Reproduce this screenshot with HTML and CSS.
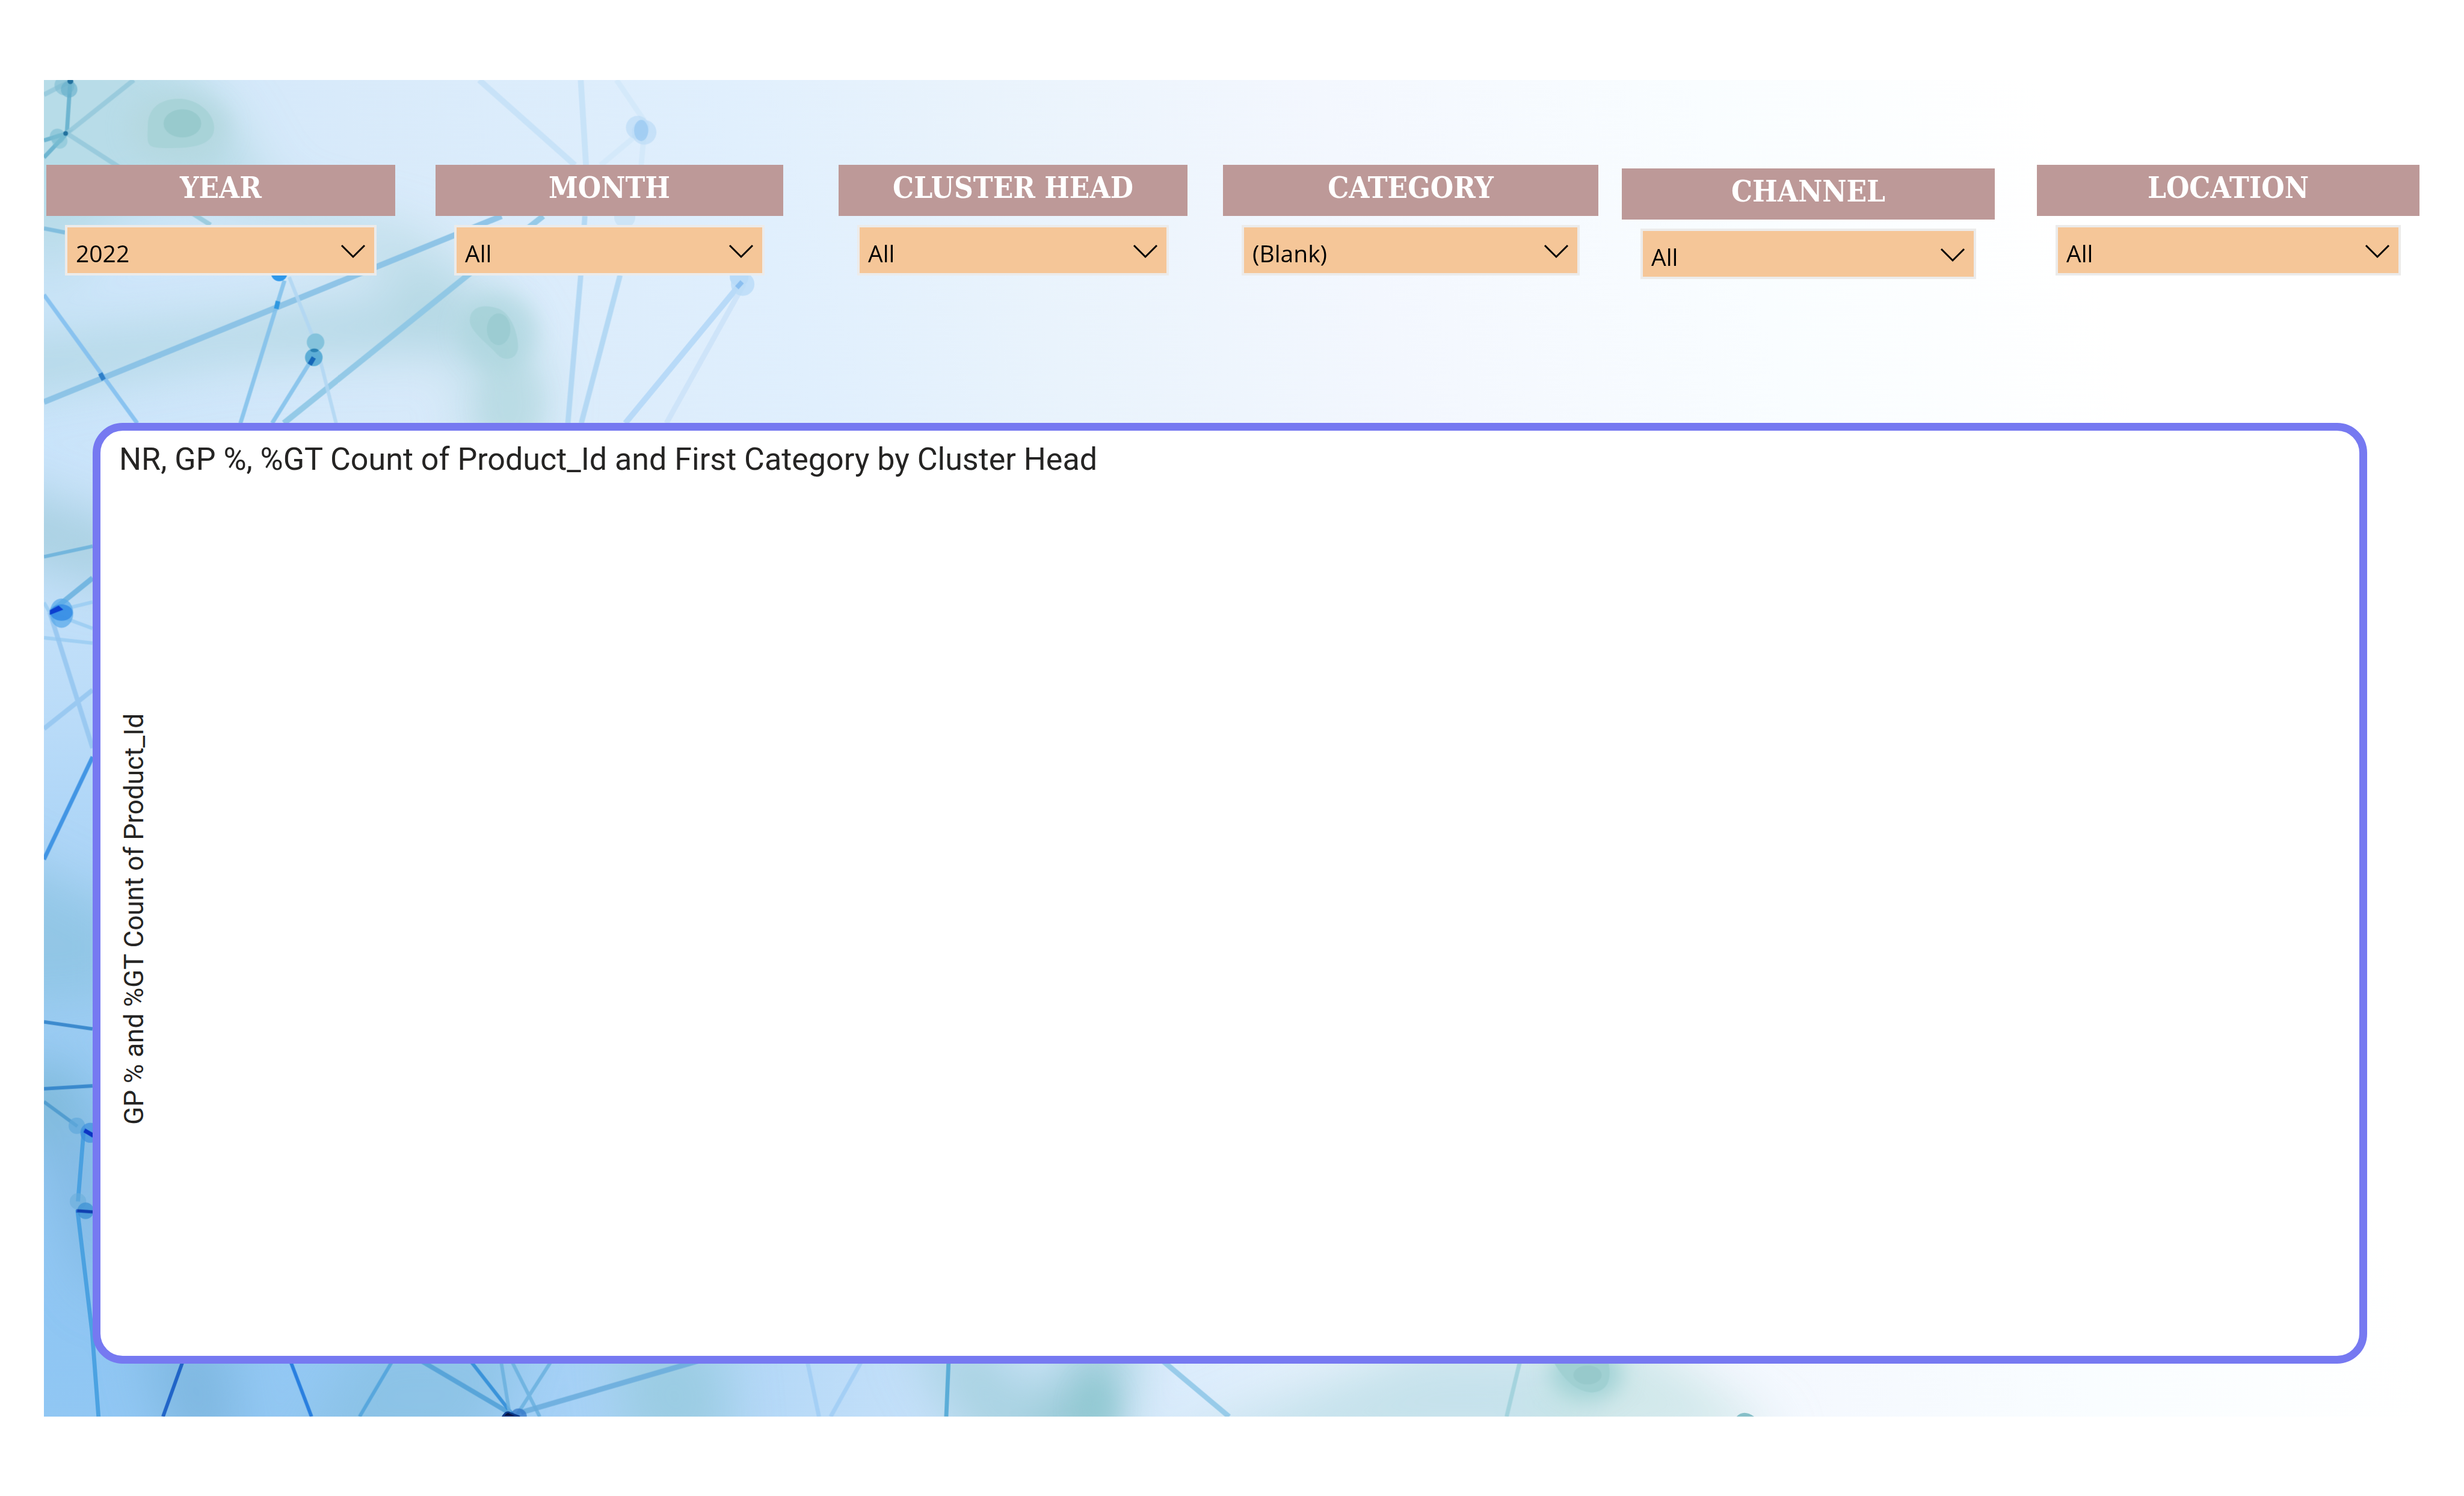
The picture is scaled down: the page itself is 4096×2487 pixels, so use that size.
FILE: index.html
```html
<!DOCTYPE html>
<html lang="en">
<head>
<meta charset="utf-8">
<title>Cluster Head Report</title>
<link rel="stylesheet" href="styles.css">
</head>
<body>
<main class="report">
  <svg class="backdrop" viewBox="75 136 4050 2279" preserveAspectRatio="none" aria-hidden="true">
    <defs>
      <linearGradient id="base" gradientUnits="userSpaceOnUse" x1="75" y1="900" x2="3400" y2="-100">
        <stop offset="0" stop-color="#c9e4fa"/>
        <stop offset=".2" stop-color="#d8eafa"/>
        <stop offset=".38" stop-color="#e0effd"/>
        <stop offset=".5" stop-color="#e9f3fc"/>
        <stop offset=".66" stop-color="#f3f7fe"/>
        <stop offset=".84" stop-color="#f9fdff"/>
        <stop offset="1" stop-color="#ffffff"/>
      </linearGradient>
      <radialGradient id="deep" gradientUnits="userSpaceOnUse" cx="0" cy="0" r="1" gradientTransform="translate(75 2300) scale(2300 1700)">
        <stop offset="0" stop-color="#8fc6f3"/>
        <stop offset=".25" stop-color="#8fc6f3" stop-opacity=".9"/>
        <stop offset=".55" stop-color="#a4d0f6" stop-opacity=".65"/>
        <stop offset="1" stop-color="#cfe4fa" stop-opacity="0"/>
      </radialGradient>
      <filter id="soft" x="-100%" y="-100%" width="300%" height="300%"><feGaussianBlur stdDeviation="18"/></filter>
      <filter id="wide" filterUnits="userSpaceOnUse" x="-200" y="-100" width="4500" height="2800"><feGaussianBlur stdDeviation="42"/></filter>
    </defs>
    <rect x="75" y="136" width="4050" height="2279" fill="url(#base)"/>
    <rect x="75" y="136" width="4050" height="2279" fill="url(#deep)"/>
    <g filter="url(#wide)">
      <path d="M-100 0H160L340 130L420 250L330 330L120 380L-100 420Z" fill="#a8d5dc" opacity=".6"/>
      <path d="M360 180L480 340L720 400L860 520L930 640L920 780H800L790 600L620 440L330 330Z" fill="#add6dd" opacity=".6"/>
      <path d="M-100 600L400 540L760 490L800 600L400 610L-100 690Z" fill="#a9d2dd" opacity=".75"/>
      <path d="M40 370H200L110 480H40Z" fill="#add6dd" opacity=".5"/>
      <path d="M-60 800L220 900V1010L-60 930Z" fill="#a3cddd" opacity=".85"/>
      <path d="M-60 1420L220 1560V1700L-60 1720Z" fill="#85bfdc" opacity=".6"/>
      <ellipse cx="75" cy="1880" rx="70" ry="70" fill="#6fafc8" opacity=".6"/>
      <path d="M60 1960L200 1900V2230L140 2180Z" fill="#79b3da" opacity=".6"/>
      <path d="M240 2280H390L410 2480H300Z" fill="#7bb4dc" opacity=".8"/>
      <path d="M620 2280H900L820 2480H500Z" fill="#86bedd" opacity=".6"/>
      <path d="M1050 2280H1230L1250 2480H1070Z" fill="#94c9dc" opacity=".75"/>
      <path d="M1550 2280H1680L1880 2480H1660Z" fill="#9fcddb" opacity=".75"/>
      <path d="M1840 2280H1930L1900 2480H1740Z" fill="#88c2cc" opacity=".8"/>
      <path d="M1960 2480L2420 2290H2600L2740 2480Z" fill="#b9dce6" opacity=".75"/>
      <path d="M2620 2240H2740L3040 2450L2640 2480Z" fill="#bfe0e1" opacity=".65"/>
    </g>
    <g filter="url(#soft)">
      <ellipse cx="304" cy="218" rx="84" ry="58" fill="#b5d8e0"/>
      <ellipse cx="850" cy="566" rx="66" ry="66" fill="#a9d4db" opacity=".6"/>
      <ellipse cx="870" cy="690" rx="54" ry="80" fill="#b0d8dd" opacity=".4"/>
      <ellipse cx="2704" cy="2342" rx="62" ry="46" fill="#a3d3d6"/>
      <ellipse cx="1870" cy="2400" rx="36" ry="50" fill="#8ac6cd" opacity=".5"/>
    </g>
    <path d="M252 215C252 180 278 168 306 168S364 190 365 216S340 252 294 252S251 250 252 215Z" fill="#a8d3d8"/>
    <ellipse cx="311" cy="210" rx="32" ry="24" fill="#98cacd"/>
    <path d="M801 548C800 520 828 518 850 526S884 572 883 592S860 618 846 602S803 566 801 548Z" fill="#a3d0d6" opacity=".7"/>
    <ellipse cx="850" cy="561" rx="20" ry="27" fill="#98cacf" opacity=".8"/>
    <path d="M2650 2325H2742Q2750 2372 2712 2374Q2676 2370 2650 2325Z" fill="#a0d0d2"/>
    <ellipse cx="2706" cy="2344" rx="24" ry="16" fill="#97c9cb"/>

    <g class="links">
      <path d="M75 685L606 469L855 368" stroke="#84bee4" stroke-width="10"/>
      <path d="M75 502L234 721" stroke="#7fbdee" stroke-width="7"/>
      <path d="M410 721L485 478M464 721L533 610" stroke="#80c0ea" stroke-width="7"/>
      <path d="M484 721L797 469L926 368" stroke="#8ac4e4" stroke-width="10"/>
      <path d="M573 721L545 610M493 472L538 585" stroke="#b0d6f2" stroke-width="6"/>
      <path d="M968 721L990 469L997 368M991 721L1057 469" stroke="#add5f2" stroke-width="9"/>
      <path d="M1066 721L1265 480" stroke="#b2d6f7" stroke-width="10"/>
      <path d="M1136 721L1268 484" stroke="#cbe2f8" stroke-width="9"/>
      <path d="M817 136L980 281M990 136L999 281" stroke="#c4e0f7" stroke-width="10"/>
      <path d="M1051 136L1098 205M1024 281L1096 221M1093 281L1098 227" stroke="#d2e7f9" stroke-width="9"/>
      <path d="M120 136L114 227M75 268L114 227L75 239" stroke="#62aecb" stroke-width="7"/>
      <path d="M114 227L228 136M114 227L198 281L359 383M75 161L120 138" stroke="#94c8da" stroke-width="8"/>
      <path d="M75 389L111 396" stroke="#78b8dc" stroke-width="7"/>

      <path d="M75 949L158 931" stroke="#68b0da" stroke-width="6"/>
      <path d="M85 1044L158 985" stroke="#68b0de" stroke-width="9"/>
      <path d="M85 1044L158 1026M75 1027L85 1044L158 1071M75 1087L158 1096" stroke="#9accf2" stroke-width="6"/>
      <path d="M85 1044L158 1275M75 1242L158 1176" stroke="#94c6f0" stroke-width="8"/>
      <path d="M75 1465L158 1290" stroke="#2f8ae0" stroke-width="7"/>
      <path d="M75 1742L158 1754M75 1856L158 1851" stroke="#2b7fc8" stroke-width="6"/>
      <path d="M75 1878L132 1920" stroke="#4a98cc" stroke-width="6"/>
      <path d="M143 1925L133 2048M132 2062L157 2270L168 2415" stroke="#3f9bde" stroke-width="7"/>
      <path d="M143 1925L158 1937M130 2064L158 2066" stroke="#1a4fc4" stroke-width="6"/>

      <path d="M312 2320L278 2415" stroke="#0f55c2" stroke-width="6"/>
      <path d="M495 2320L531 2415" stroke="#1672dc" stroke-width="6"/>
      <path d="M669 2320L613 2415" stroke="#4fa2da" stroke-width="6"/>
      <path d="M718 2320L874 2412" stroke="#4f9fd6" stroke-width="8"/>
      <path d="M802 2320L874 2412" stroke="#2a8ad6" stroke-width="6"/>
      <path d="M854 2320L869 2412M872 2320L920 2415M940 2320L881 2412" stroke="#6ab0de" stroke-width="6"/>
      <path d="M1190 2320L888 2408" stroke="#68acdc" stroke-width="9"/>
      <path d="M1376 2320L1396 2415M1469 2320L1416 2415" stroke="#a0cdf4" stroke-width="7"/>
      <path d="M1617 2320L1613 2415" stroke="#4aa4d4" stroke-width="7"/>
      <path d="M1982 2320L2095 2415" stroke="#8cc6e6" stroke-width="9"/>
      <path d="M2591 2320L2568 2415" stroke="#9ed0da" stroke-width="7"/>
    </g>
    <g class="nodes">
      <circle cx="110" cy="145" r="17" fill="#7dbdd2" opacity=".6"/><circle cx="118" cy="152" r="14" fill="#62adca" opacity=".6"/><circle cx="120" cy="138" r="5" fill="#22719e"/>
      <circle cx="98" cy="232" r="13" fill="#79bdd2" opacity=".6"/><circle cx="102" cy="240" r="13" fill="#79bdd2" opacity=".5"/><circle cx="112" cy="227" r="4" fill="#22719e"/>
      <circle cx="1087" cy="217" r="20" fill="#bcdcf6" opacity=".7"/><circle cx="1098" cy="225" r="21" fill="#bcdcf6" opacity=".7"/><ellipse cx="1093" cy="222" rx="12" ry="18" fill="#9ccbf3" opacity=".8"/>
      <circle cx="476" cy="465" r="14" fill="#2f98ea"/>
      <path d="M471 526L474 513" stroke="#2f98e0" stroke-width="8"/><path d="M171 636L177 647" stroke="#2f7fc8" stroke-width="8"/>
      <circle cx="538" cy="583" r="15" fill="#85c3dc"/><circle cx="535" cy="609" r="15" fill="#5dadd6"/><path d="M528 621L535 609" stroke="#1567b8" stroke-width="8"/><ellipse cx="536" cy="597" rx="7" ry="3" fill="#2b82b4"/>
      <circle cx="1266" cy="484" r="20" fill="#b9dbf8" opacity=".8"/><circle cx="1260" cy="472" r="16" fill="#b9dbf8"/><path d="M1256 490L1265 480" stroke="#8bbff0" stroke-width="8"/>
      <circle cx="1065" cy="370" r="18" fill="#cde4f6"/>
      <ellipse cx="105" cy="1045" rx="20" ry="25" fill="#5aaaea" opacity=".75"/><ellipse cx="105" cy="1044" rx="19" ry="14" fill="#2f88e4" opacity=".8"/><path d="M85 1040L85 1048L108 1039L100 1032Z" fill="#0b3ed0"/>
      <circle cx="131" cy="1919" r="14" fill="#5fa8dc" opacity=".7"/><circle cx="154" cy="1931" r="17" fill="#3c8fdd" opacity=".7"/><path d="M144 1927L160 1936" stroke="#0c34c4" stroke-width="7"/>
      <circle cx="133" cy="2048" r="14" fill="#6aaedb" opacity=".6"/><circle cx="146" cy="2064" r="14" fill="#4094d4" opacity=".8"/><path d="M132 2064L160 2066" stroke="#1040b0" stroke-width="5"/>
      <circle cx="884" cy="2415" r="14" fill="#2c70c4" opacity=".7"/><path d="M857 2415Q864 2404 870 2409L886 2415Z" fill="#03113f" stroke="#0a3a8a" stroke-width="3"/>
      <path d="M2960 2415Q2972 2402 2990 2415Z" fill="#86bfc8"/>
    </g>
  </svg>

  <form class="slicers">
    <div class="slicer year">
      <label class="slicer-title" for="year">YEAR</label>
      <div class="dropdown">
        <select id="year"><option>2022</option></select>
        <svg class="chevron" viewBox="0 0 40 22" aria-hidden="true"><path d="M1 1L20 20L39 1"/></svg>
      </div>
    </div>
    <div class="slicer month">
      <label class="slicer-title" for="month">MONTH</label>
      <div class="dropdown">
        <select id="month"><option>All</option></select>
        <svg class="chevron" viewBox="0 0 40 22" aria-hidden="true"><path d="M1 1L20 20L39 1"/></svg>
      </div>
    </div>
    <div class="slicer cluster">
      <label class="slicer-title" for="cluster">CLUSTER HEAD</label>
      <div class="dropdown">
        <select id="cluster"><option>All</option></select>
        <svg class="chevron" viewBox="0 0 40 22" aria-hidden="true"><path d="M1 1L20 20L39 1"/></svg>
      </div>
    </div>
    <div class="slicer category">
      <label class="slicer-title" for="category">CATEGORY</label>
      <div class="dropdown">
        <select id="category"><option>(Blank)</option></select>
        <svg class="chevron" viewBox="0 0 40 22" aria-hidden="true"><path d="M1 1L20 20L39 1"/></svg>
      </div>
    </div>
    <div class="slicer channel">
      <label class="slicer-title" for="channel">CHANNEL</label>
      <div class="dropdown">
        <select id="channel"><option>All</option></select>
        <svg class="chevron" viewBox="0 0 40 22" aria-hidden="true"><path d="M1 1L20 20L39 1"/></svg>
      </div>
    </div>
    <div class="slicer location">
      <label class="slicer-title" for="location">LOCATION</label>
      <div class="dropdown">
        <select id="location"><option>All</option></select>
        <svg class="chevron" viewBox="0 0 40 22" aria-hidden="true"><path d="M1 1L20 20L39 1"/></svg>
      </div>
    </div>
  </form>

  <section class="chart">
    <h2 class="chart-title">NR, GP %, %GT Count of Product_Id and First Category by Cluster Head</h2>
    <div class="plot">
      <p class="axis-title">GP % and %GT Count of Product_Id</p>
    </div>
  </section>
</main>
</body>
</html>
```
FILE: styles.css
```css
* {
  box-sizing: border-box;
}

body {
  margin: 0;
  padding: 133px 73px 132px;
  background: #fff;
  color: #252423;
  font-family: Roboto, sans-serif;
}

.report {
  position: relative;
  display: flex;
  flex-direction: column;
  gap: 245px;
  min-height: calc(100vh - 265px);
  padding: 141px 0 88px;
}

.backdrop {
  position: absolute;
  inset: 0;
  width: 100%;
  height: 100%;
  z-index: -1;
}

.links path {
  fill: none;
  opacity: .85;
}

/* Slicer tracks alternate with the gutters between them */
.slicers {
  display: grid;
  grid-template-columns: 580fr 67fr 578fr 92fr 580fr 59fr 624fr 39fr 620fr 70fr 636fr;
  align-items: start;
  height: 184px;
  padding: 0 1px 0 4px;
}

.slicer {
  display: flex;
  flex-direction: column;
  gap: 15px;
}

.year { grid-column: 1; }
.month { grid-column: 3; }
.cluster { grid-column: 5; }
.category { grid-column: 7; }
.channel { grid-column: 9; padding-top: 6px; }
.location { grid-column: 11; }

.slicer-title {
  height: 85px;
  background: #bd9998;
  color: #fff;
  font: bold 49px/76px "DejaVu Serif Condensed", "DejaVu Serif", serif;
  text-align: center;
}

.dropdown {
  display: grid;
  grid-template-columns: 1fr;
  align-items: center;
  margin: 0 31px;
}

.dropdown select {
  grid-area: 1 / 1;
  width: 100%;
  height: 84px;
  padding: 9px 60px 0 14px;
  appearance: none;
  border: 4px solid #ecebea;
  border-radius: 0;
  background: #f5c698;
  color: #000;
  font: 39px/56px "Open Sans", sans-serif;
}

.chevron {
  grid-area: 1 / 1;
  justify-self: end;
  width: 40px;
  height: 22px;
  margin: 4px 19px 0 0;
  overflow: visible;
  pointer-events: none;
}

.chevron path {
  fill: none;
  stroke: #000;
  stroke-width: 3;
}

.chart {
  flex: 1;
  display: flex;
  flex-direction: column;
  min-height: 600px;
  margin: 0 88px 0 81px;
  border: 13px solid #7679f1;
  border-radius: 50px;
  background: #fff;
}

.chart-title {
  height: 85px;
  margin: 0;
  padding-left: 31px;
  font-size: 52px;
  font-weight: 400;
  line-height: 96px;
}

.plot {
  flex: 1;
  display: flex;
  align-items: center;
  padding-left: 28px;
}

.axis-title {
  margin: 0;
  writing-mode: vertical-rl;
  transform: rotate(180deg);
  font-size: 44px;
  line-height: 56px;
}
```
